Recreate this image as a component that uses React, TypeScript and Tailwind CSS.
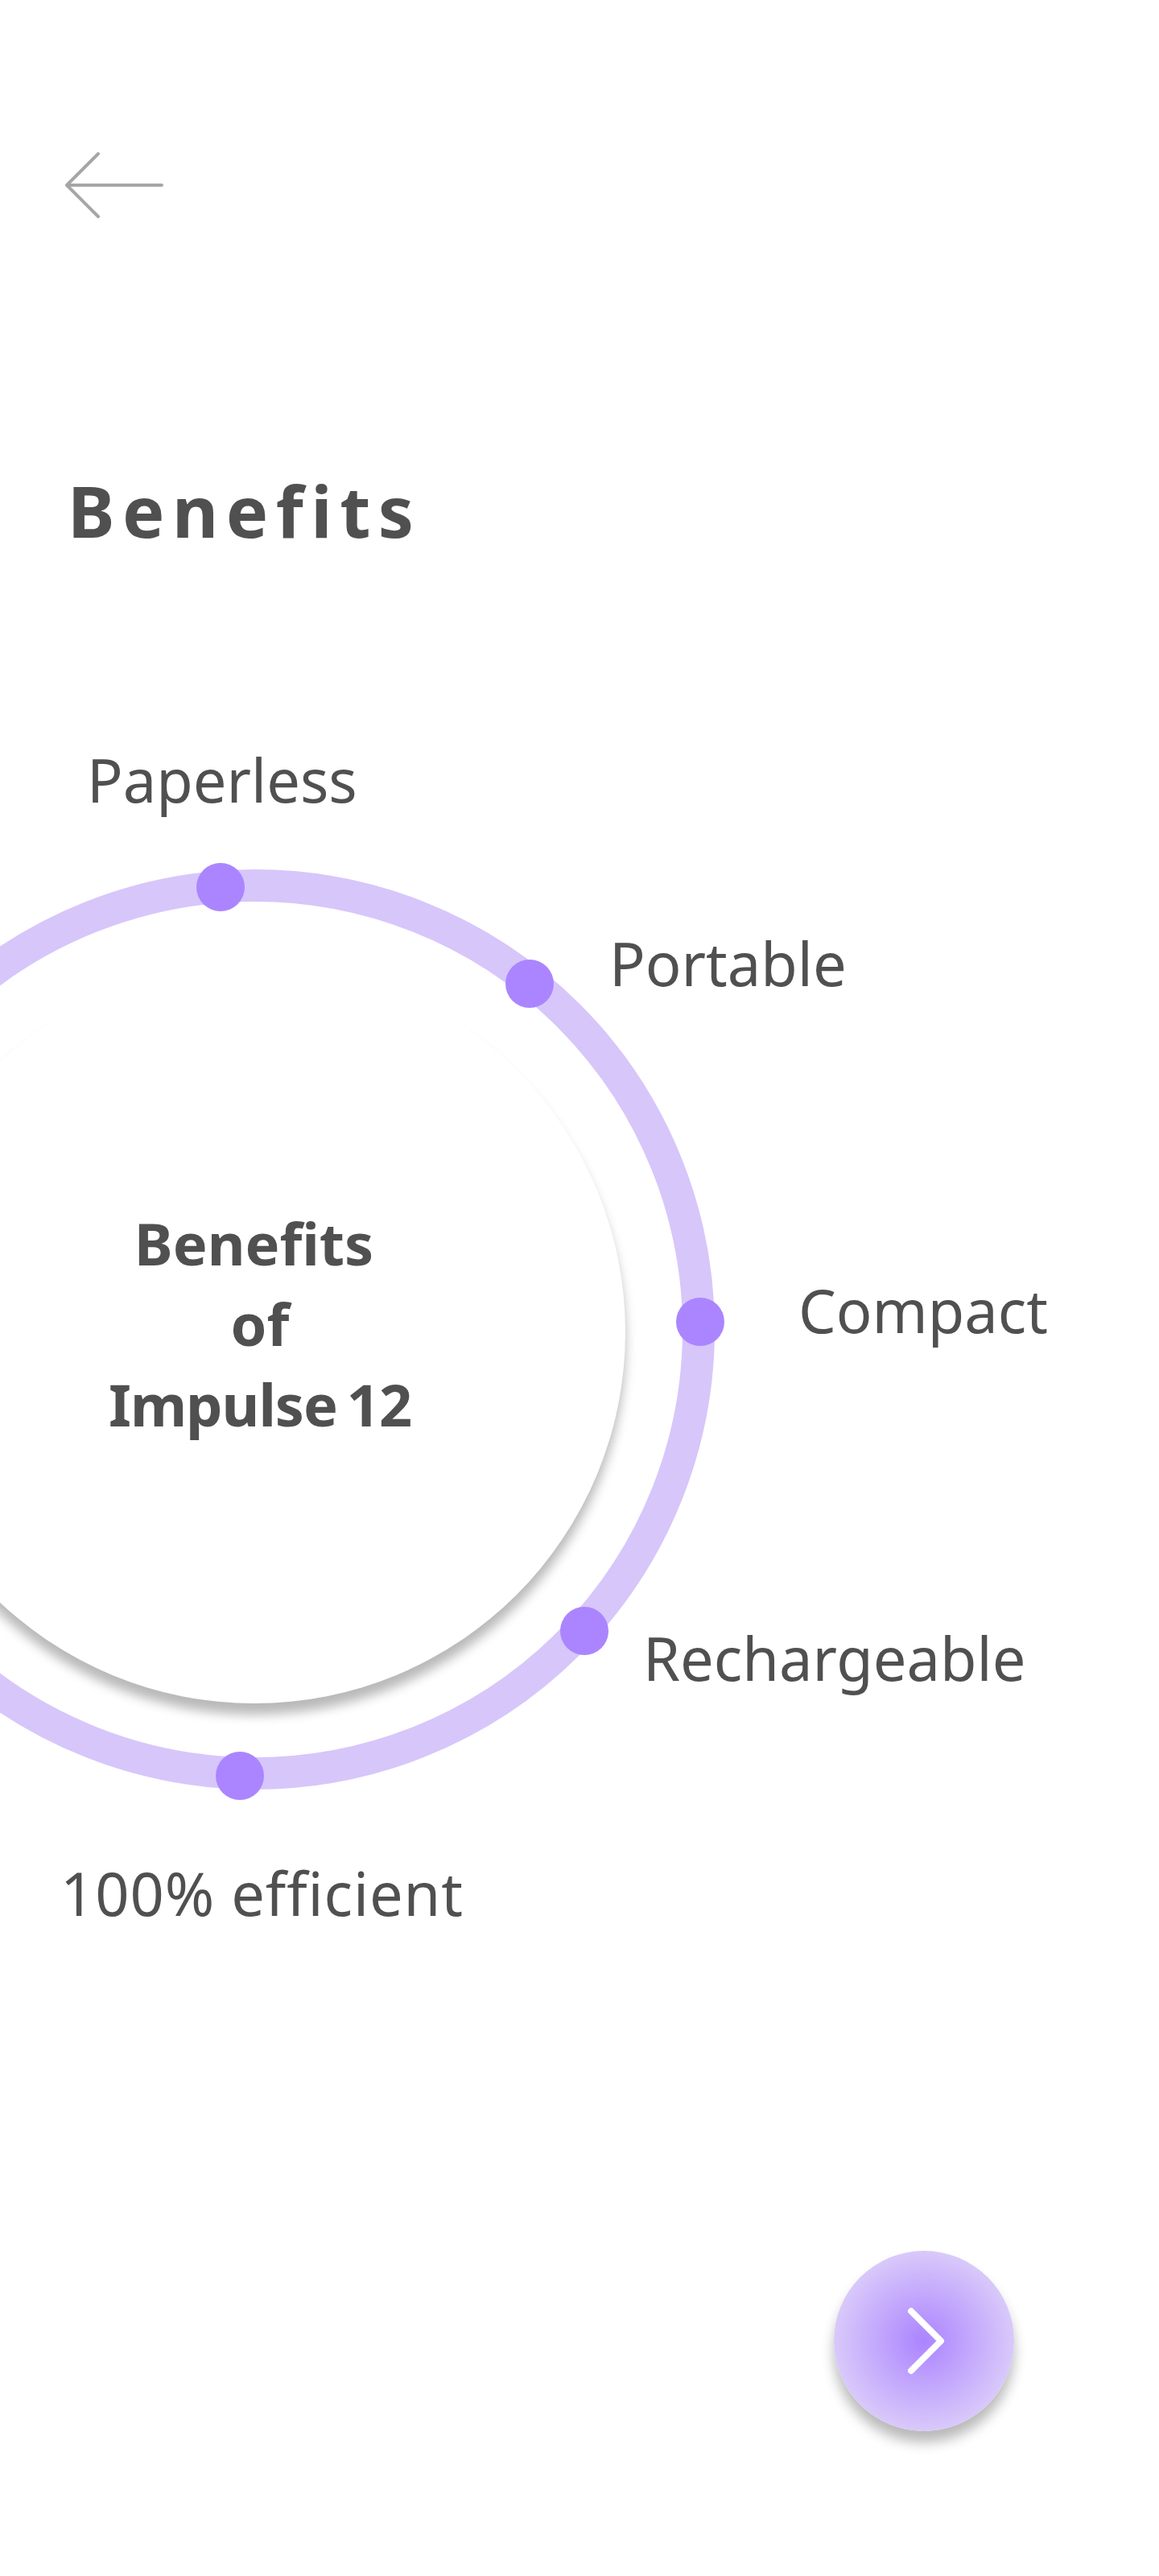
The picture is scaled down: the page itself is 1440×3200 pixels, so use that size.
const labels = [
  { text: "Paperless", className: "left-[108px] top-[19px]" },
  { text: "Portable", className: "left-[757px] top-[247px]" },
  { text: "Compact", className: "left-[992px] top-[678px]" },
  { text: "Rechargeable", className: "left-[799px] top-[1110px]" },
  { text: "100% efficient", className: "left-[75px] top-[1402px] tracking-[0.9px]" },
];

const dots = [
  "left-[244px] top-[172px]",
  "left-[628px] top-[292px]",
  "left-[840px] top-[712px]",
  "left-[696px] top-[1096px]",
  "left-[268px] top-[1276px]",
];

export default function App() {
  return (
    <main className="relative flex h-[3200px] w-[1440px] flex-col overflow-hidden bg-white font-['Noto_Sans',sans-serif] text-[#505050]">
      {/* Header */}
      <header className="pl-[81px] pt-[188px]">
        <svg width="124" height="84" viewBox="0 0 124 84" fill="none" stroke="#a6a6a6" strokeWidth="4" strokeLinecap="round" strokeLinejoin="round">
          <path d="M41 3 2 42l39 39M2 42h118" />
        </svg>
        <h1 className="ml-[3px] mt-[302px] text-[88px] font-bold leading-[120px] tracking-[9.5px]">Benefits</h1>
      </header>

      {/* Diagram */}
      <section className="relative mt-[206px] h-[1500px]">
        <div className="absolute left-[-255px] top-[180px] h-[1143px] w-[1143px] rounded-full border-[40px] border-[#d7c6fa]" />
        <div className="absolute left-[-145px] top-[294px] flex h-[922px] w-[922px] items-center justify-center rounded-full bg-white pb-[22px] pl-[14px] shadow-[0_14px_14px_rgba(0,0,0,0.28)]">
          <div className="text-center text-[72px] font-bold leading-[100px]">
            <p className="pr-[15px]">Benefits</p>
            <p>of</p>
            <p className="tracking-[-1px] [word-spacing:-6px]">Impulse 12</p>
          </div>
        </div>
        {dots.map((d) => (
          <div key={d} className={`absolute h-[60px] w-[60px] rounded-full bg-[#ab85ff] ${d}`} />
        ))}
        {labels.map((l) => (
          <span key={l.text} className={`absolute whitespace-nowrap text-[74px] leading-[100px] ${l.className}`}>
            {l.text}
          </span>
        ))}
      </section>

      {/* Next button */}
      <div className="flex justify-end pr-[180px] pt-[396px]">
        <button className="flex h-[224px] w-[224px] items-center justify-center rounded-full bg-[radial-gradient(circle_closest-side,#ab84ff_0%,#d9c9fa_100%)] shadow-[0_14px_16px_rgba(0,0,0,0.28)]">
          <svg width="48" height="84" viewBox="0 0 48 84" fill="none" stroke="white" strokeWidth="8" strokeLinecap="round" strokeLinejoin="round" className="ml-[6px]">
            <path d="M5 5l37 37L5 79" />
          </svg>
        </button>
      </div>
    </main>
  );
}
